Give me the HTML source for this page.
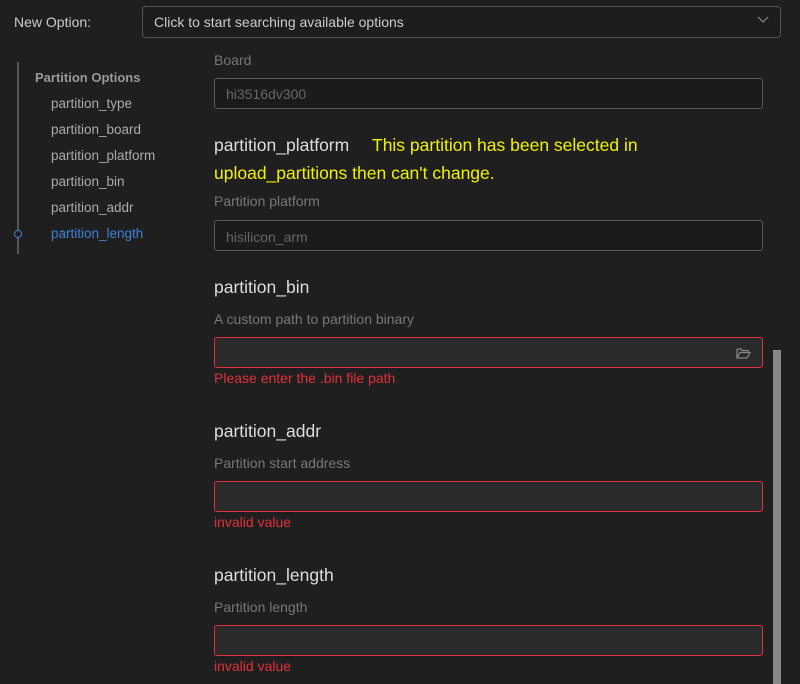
<!DOCTYPE html>
<html><head><style>
body{margin:0;width:800px;height:684px;background:#1f1f1f;font-family:"Liberation Sans",sans-serif;position:relative;overflow:hidden;color:#ccc}
.a{position:absolute;white-space:nowrap}
.in{position:absolute;left:214px;width:547px;height:29px;border:1px solid #5a5a5a;border-radius:3px;background:#1b1b1b;box-sizing:content-box}
.err{border-color:#e0303a;background:#2a2a2a}
.lbl{font-size:14px;color:#777}
.h{font-size:17.5px;color:#ddd}
.e{font-size:14px;color:#e0303a}
.nav{font-size:13.5px;color:#aaa;left:51px}
</style></head><body>
<div class="a" style="left:14px;top:14px;font-size:14px;color:#ccc">New Option:</div>
<div class="a" style="left:142px;top:6px;width:637px;height:30px;border:1px solid #555;border-radius:4px;background:#1d1d1d"></div>
<div class="a" style="left:154px;top:14px;font-size:14px;color:#ccc">Click to start searching available options</div>
<svg class="a" style="left:757px;top:15px" width="12" height="10"><path d="M1 2l5 5 5-5" stroke="#888" fill="none" stroke-width="1.2"/></svg>

<div class="a" style="left:17px;top:62px;width:2px;height:192px;background:#555"></div>
<div class="a" style="left:14px;top:230px;width:6px;height:6px;border:1.5px solid #3b82d8;border-radius:50%;background:#1f1f1f"></div>
<div class="a" style="left:35px;top:70px;font-size:13px;font-weight:bold;color:#999">Partition Options</div>
<div class="a nav" style="top:96px">partition_type</div>
<div class="a nav" style="top:122px">partition_board</div>
<div class="a nav" style="top:148px">partition_platform</div>
<div class="a nav" style="top:174px">partition_bin</div>
<div class="a nav" style="top:200px">partition_addr</div>
<div class="a nav" style="top:226px;color:#3b82d8">partition_length</div>

<div class="a lbl" style="left:214px;top:52px">Board</div>
<div class="in" style="top:78px"></div>
<div class="a" style="left:226px;top:86px;font-size:14px;color:#666">hi3516dv300</div>

<div class="a h" style="left:214px;top:135px">partition_platform</div>
<div class="a" style="left:372px;top:135px;font-size:17.5px;color:#f2f200">This partition has been selected in</div>
<div class="a" style="left:214px;top:163px;font-size:17.5px;color:#f2f200">upload_partitions then can't change.</div>
<div class="a lbl" style="left:214px;top:193px">Partition platform</div>
<div class="in" style="top:220px"></div>
<div class="a" style="left:226px;top:229px;font-size:14px;color:#666">hisilicon_arm</div>

<div class="a h" style="left:214px;top:277px">partition_bin</div>
<div class="a lbl" style="left:214px;top:311px">A custom path to partition binary</div>
<div class="in err" style="top:337px"></div>
<svg class="a" style="left:736px;top:347px" width="15" height="12"><path d="M1 2h4l1 1.5h6v2M1 2v9h10l3-5.5H4L1 11" stroke="#888" fill="none" stroke-width="1.2"/></svg>
<div class="a e" style="left:214px;top:370px">Please enter the .bin file path</div>

<div class="a h" style="left:214px;top:421px">partition_addr</div>
<div class="a lbl" style="left:214px;top:455px">Partition start address</div>
<div class="in err" style="top:481px"></div>
<div class="a e" style="left:214px;top:514px">invalid value</div>

<div class="a h" style="left:214px;top:565px">partition_length</div>
<div class="a lbl" style="left:214px;top:599px">Partition length</div>
<div class="in err" style="top:625px"></div>
<div class="a e" style="left:214px;top:658px">invalid value</div>

<div class="a" style="left:773px;top:350px;width:8px;height:334px;background:#888"></div>
</body></html>
